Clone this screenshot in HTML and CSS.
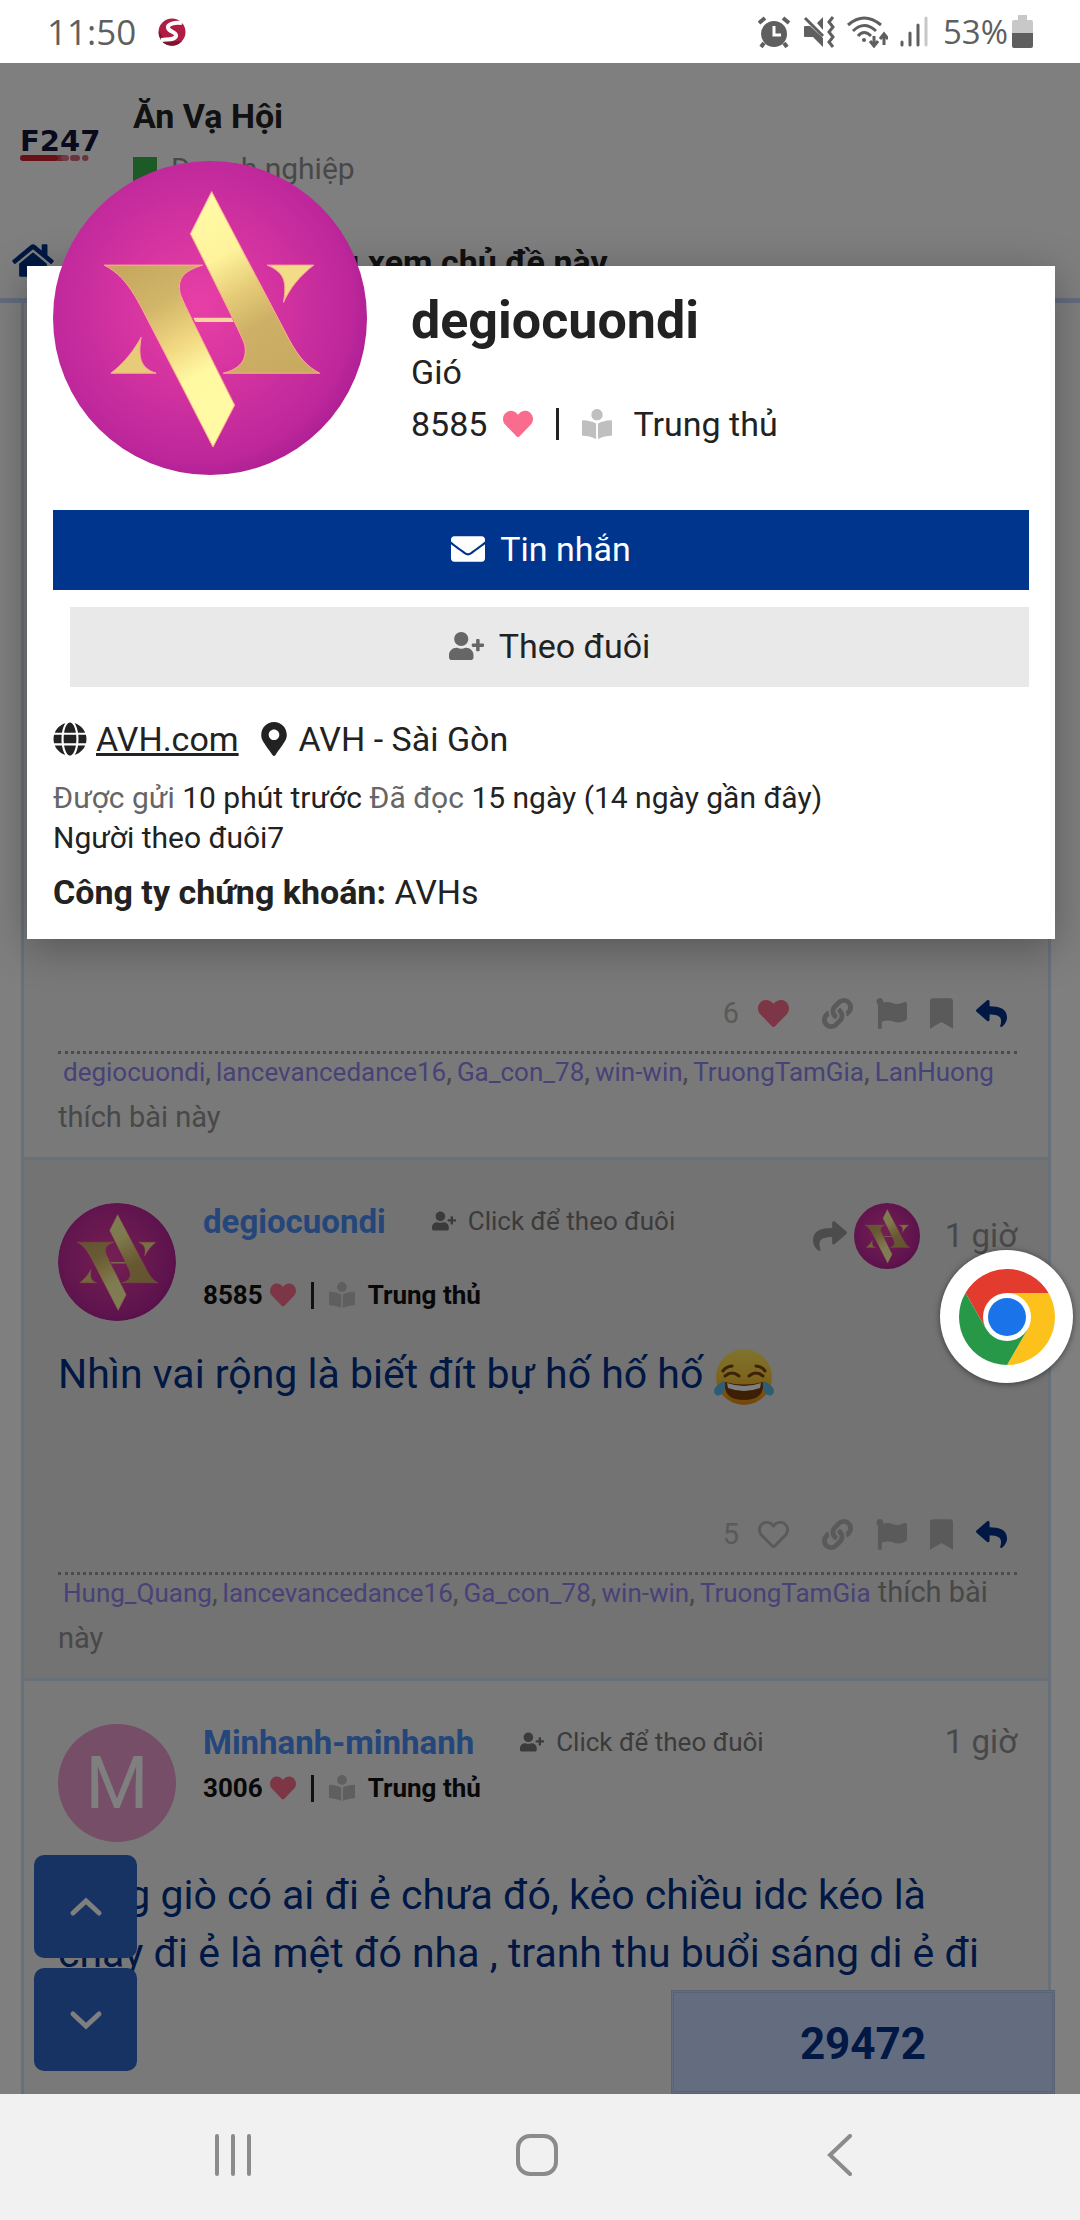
FILE: index.html
```html
<!DOCTYPE html>
<html lang="vi">

<head>
    <meta charset="UTF-8">
    <meta name="viewport" content="width=device-width, initial-scale=1.0">
    <title>Ăn Vạ Hội - F247</title>
    <link rel="stylesheet" href="styles.css">
</head>

<body>
    <!-- shared icons -->
    <svg class="sprite" width="0" height="0" aria-hidden="true">
        <defs>
            <radialGradient id="pink" cx="46%" cy="46%" r="58%">
                <stop offset="0" stop-color="#e83fa6" />
                <stop offset="0.5" stop-color="#d0319f" />
                <stop offset="0.85" stop-color="#bd279b" />
                <stop offset="1" stop-color="#aa1d92" />
            </radialGradient>
            <linearGradient id="goldA" x1="0.2" y1="0" x2="0.6" y2="1">
                <stop offset="0" stop-color="#c6a95f" />
                <stop offset="0.25" stop-color="#d0b468" />
                <stop offset="0.5" stop-color="#f0d780" />
                <stop offset="0.7" stop-color="#fff9a2" />
                <stop offset="1" stop-color="#fffaa4" />
            </linearGradient>
            <linearGradient id="goldB" x1="0.3" y1="0" x2="0.7" y2="1">
                <stop offset="0" stop-color="#fffaa6" />
                <stop offset="0.28" stop-color="#fff39c" />
                <stop offset="0.5" stop-color="#e6cc78" />
                <stop offset="0.7" stop-color="#ceb166" />
                <stop offset="1" stop-color="#c8aa60" />
            </linearGradient>
        </defs>
        <symbol id="avh" viewBox="160 33 944 944">
            <circle cx="632" cy="505" r="472" fill="url(#pink)" />
            <g stroke="#ffab8e" stroke-width="3">
                <path fill="url(#goldA)" d="M314 346H610C560 362 535 380 541 424C545 446 556 465 706 767L641 893L428 478C390 405 360 370 314 346Z" />
                <path fill="url(#goldB)" d="M637 125L870 570C900 625 925 652 962 671H672C722 658 743 632 737 590C733 570 718 540 573 252Z" />
                <path fill="#f2dc88" d="M804 346H944C900 380 872 416 853 458C862 400 860 370 804 346Z" />
                <path fill="#e6cb78" d="M425 563C416 620 420 655 470 671H334C375 640 405 600 425 563Z" />
            </g>
            <path fill="#fbd2a0" d="M582 504H697L703 517H588Z" />
        </symbol>
        <symbol id="heart" viewBox="0 0 512 512">
            <path d="M462.3 62.6C407.5 15.9 326 24.3 275.7 76.2L256 96.5l-19.7-20.3C186.1 24.3 104.5 15.9 49.7 62.6c-62.8 53.6-66.1 149.8-9.9 207.9l193.5 199.8c12.5 12.9 32.8 12.9 45.3 0l193.5-199.8c56.3-58.1 53-154.3-9.8-207.9z" />
        </symbol>
        <symbol id="heart-o" viewBox="0 0 512 512">
            <path d="M458.4 64.3C400.6 15.7 311.3 23 256 79.3 200.7 23 111.4 15.6 53.6 64.3-21.6 127.6-10.6 230.8 43 285.5l175.4 178.7c10 10.2 23.4 15.9 37.6 15.9 14.3 0 27.6-5.6 37.6-15.8L469 285.6c53.5-54.7 64.7-157.9-10.6-221.3zm-23.6 187.5L259.4 430.5c-2.4 2.4-4.4 2.4-6.8 0L77.2 251.8c-36.5-37.2-43.9-107.6 7.3-150.7 38.9-32.7 98.9-27.8 136.5 10.5l35 35.7 35-35.7c37.8-38.5 97.8-43.2 136.5-10.6 51.1 43.1 43.5 113.9 7.3 150.8z" />
        </symbol>
        <symbol id="reader" viewBox="0 0 512 512">
            <path d="M352 96c0-53-43-96-96-96s-96 43-96 96 43 96 96 96 96-43 96-96zM233.6 241.1C174.3 217.4 97 194.6 22 192.1 10 191.5 0 200.6 0 212v226c0 10.6 8.3 19.2 19.2 19.9 62 3.6 150 17.8 210 51.6 5 3 10.8-.6 10.8-6V252c0-4.5-2-8.8-6.4-10.9zM278.4 241.1C337.7 217.4 415 194.6 490 192.1 502 191.5 512 200.6 512 212v226c0 10.6-8.3 19.2-19.2 19.9-62 3.6-150 17.8-210 51.6-5 3-10.8-.6-10.8-6V252c0-4.5 2-8.8 6.4-10.9z" />
        </symbol>
        <symbol id="user-plus" viewBox="0 0 640 512">
            <path d="M624 208h-64v-64c0-8.8-7.2-16-16-16h-32c-8.8 0-16 7.2-16 16v64h-64c-8.8 0-16 7.2-16 16v32c0 8.8 7.2 16 16 16h64v64c0 8.8 7.2 16 16 16h32c8.8 0 16-7.2 16-16v-64h64c8.8 0 16-7.2 16-16v-32c0-8.8-7.2-16-16-16zm-400 48c70.7 0 128-57.3 128-128S294.7 0 224 0 96 57.3 96 128s57.3 128 128 128zm89.6 32h-16.7c-22.2 10.2-46.9 16-72.9 16s-50.6-5.8-72.9-16h-16.7C60.2 288 0 348.2 0 422.4V464c0 26.5 21.5 48 48 48h352c26.5 0 48-21.5 48-48v-41.6c0-74.2-60.2-134.4-134.4-134.4z" />
        </symbol>
        <symbol id="link" viewBox="0 0 512 512">
            <path d="M326.612 185.391c59.747 59.809 58.927 155.698.36 214.59-.11.12-.24.25-.36.37l-67.2 67.2c-59.27 59.27-155.699 59.262-214.96 0-59.27-59.26-59.27-155.7 0-214.96l37.106-37.106c9.84-9.84 26.786-3.3 27.294 10.606.648 17.722 3.826 35.527 9.69 52.721 1.986 5.822.567 12.262-3.783 16.612l-13.087 13.087c-28.026 28.026-28.905 73.66-1.155 101.96 28.024 28.579 74.086 28.749 102.325.51l67.2-67.19c28.191-28.191 28.073-73.757 0-101.83-3.701-3.694-7.429-6.564-10.341-8.569a16.037 16.037 0 0 1-6.947-12.606c-.396-10.567 3.348-21.456 11.698-29.806l21.054-21.055c5.521-5.521 14.182-6.199 20.584-1.731a152.482 152.482 0 0 1 20.522 17.197zM467.547 44.449c-59.261-59.262-155.69-59.27-214.96 0l-67.2 67.2c-.12.12-.25.25-.36.37-58.566 58.892-59.387 154.781.36 214.59a152.454 152.454 0 0 0 20.521 17.196c6.402 4.468 15.064 3.789 20.584-1.731l21.054-21.055c8.35-8.35 12.094-19.239 11.698-29.806a16.037 16.037 0 0 0-6.947-12.606c-2.912-2.005-6.64-4.875-10.341-8.569-28.073-28.073-28.191-73.639 0-101.83l67.2-67.19c28.239-28.239 74.3-28.069 102.325.51 27.75 28.3 26.872 73.934-1.155 101.96l-13.087 13.087c-4.35 4.35-5.769 10.79-3.783 16.612 5.864 17.194 9.042 34.999 9.69 52.721.509 13.906 17.454 20.446 27.294 10.606l37.106-37.106c59.271-59.259 59.271-155.699.001-214.959z" />
        </symbol>
        <symbol id="flag" viewBox="0 0 512 512">
            <path d="M349.565 98.783C295.978 98.783 251.721 64 184.348 64c-24.955 0-47.309 4.384-68.045 12.013a55.947 55.947 0 0 0 3.586-23.562C118.117 24.015 94.806 1.206 66.338.048 34.345-1.254 8 24.296 8 56c0 19.026 9.497 35.825 24 45.945V488c0 13.255 10.745 24 24 24h16c13.255 0 24-10.745 24-24v-94.4c28.311-12.064 63.582-22.122 114.435-22.122 53.588 0 97.844 34.783 165.217 34.783 48.169 0 86.667-16.294 122.505-40.858C506.84 359.452 512 349.571 512 339.045v-243.1c0-23.393-24.269-38.87-45.485-29.016-34.338 15.948-76.454 31.854-116.95 31.854z" />
        </symbol>
        <symbol id="bookmark" viewBox="0 0 384 512">
            <path d="M0 512V48C0 21.49 21.49 0 48 0h288c26.51 0 48 21.49 48 48v464L192 400 0 512z" />
        </symbol>
        <symbol id="reply" viewBox="0 0 512 512">
            <path d="M8.309 189.836L184.313 37.851C199.719 24.546 224 35.347 224 56.015v80.053c160.629 1.839 288 34.032 288 186.258 0 61.441-39.581 122.309-83.333 154.132-13.653 9.931-33.111-2.533-28.077-18.631 45.344-145.012-21.507-183.51-176.59-185.742V360c0 20.7-24.3 31.453-39.687 18.164l-176.004-152c-11.071-9.562-11.086-26.753 0-36.328z" />
        </symbol>
    </svg>

    <header class="status-bar">
        <span class="clock">11:50</span>
        <svg class="status-logo" viewBox="0 0 28 28">
            <circle cx="14" cy="14" r="13.5" fill="#b01c42" />
            <path d="M1 13A13 13 0 0 0 24 23L8 24Z" fill="#7c1430" />
            <path d="M24 5C17 4 9 6 10 10C11 14 19 14 18 18C17 22 10 21 3 22" fill="none" stroke="#fff" stroke-width="4" />
        </svg>
        <div class="status-icons">
            <svg width="34" height="32" viewBox="0 0 34 32">
                <circle cx="17" cy="18" r="13" fill="#5f5f5f" />
                <path d="M2 7L8 2M32 7L26 2M7 27L4 31M27 27L30 31" stroke="#5f5f5f" stroke-width="4" />
                <path d="M17 10V19H24" fill="none" stroke="#fff" stroke-width="3" />
            </svg>
            <svg width="32" height="32" viewBox="0 0 32 32">
                <path fill="#5f5f5f" d="M1 11Q1 10 2 10H7L20 22V31L10 21H2Q1 21 1 20ZM14 7L20 1V14Z" />
                <path d="M2 2L20 20" stroke="#5f5f5f" stroke-width="3" />
                <path d="M30 1L26 6L30 11L26 16L30 21L26 26L30 31" fill="none" stroke="#5f5f5f" stroke-width="3" />
            </svg>
            <svg width="41" height="32" viewBox="0 0 41 32">
                <g fill="none" stroke="#5f5f5f" stroke-width="3">
                    <path d="M1 9Q17 -5 34 9M6 15Q17 4 29 15M11 20Q17 13 24 20" />
                    <path d="M27 20V29M23 25L27 30L31 25M37 29V19M33 23L37 18L41 23" />
                </g>
                <circle cx="17" cy="24" r="2" fill="#5f5f5f" />
            </svg>
            <svg width="28" height="32" viewBox="0 0 28 32" stroke-width="3" stroke-linecap="round">
                <path d="M2 26V29M10 17V29M18 9V29" stroke="#5f5f5f" />
                <path d="M26 2V29" stroke="#c8c8c8" />
            </svg>
        </div>
        <span class="battery-text">53%</span>
        <svg class="battery" width="21" height="33" viewBox="0 0 21 33">
            <path fill="#c8c8c8" d="M6 0H15V5H19Q21 5 21 7V18H0V7Q0 5 2 5H6Z" />
            <path fill="#5f5f5f" d="M0 18H21V31Q21 33 19 33H2Q0 33 0 31Z" />
        </svg>
    </header>

    <main class="page">
        <div class="site-header">
            <a href="#" class="logo">
                <span>F247</span>
                <svg width="80" height="6" viewBox="0 0 80 6">
                    <path d="M3 3H36" stroke="#d3202f" stroke-width="6" stroke-linecap="round" />
                    <path d="M38 3H44" stroke="#d8485a" stroke-width="6" />
                    <path d="M44 3H46" stroke="#dc7888" stroke-width="6" stroke-linecap="round" />
                    <path d="M53 3H57M65 3H65.5" stroke="#d8687c" stroke-width="6" stroke-linecap="round" />
                </svg>
            </a>
            <div class="topic">
                <h1>Ăn Vạ Hội</h1>
                <a href="#" class="category"><span class="swatch"></span>Doanh nghiệp</a>
            </div>
        </div>
        <div class="crumbs">
            <svg width="42" height="37" viewBox="0 0 576 512">
                <path d="M280.37 148.26L96 300.11V464a16 16 0 0 0 16 16l112.06-.29a16 16 0 0 0 15.92-16V368a16 16 0 0 1 16-16h64a16 16 0 0 1 16 16v95.64a16 16 0 0 0 16 16.05L464 480a16 16 0 0 0 16-16V300L295.67 148.26a12.19 12.19 0 0 0-15.3 0zM571.6 251.47L488 182.56V44.05a12 12 0 0 0-12-12h-56a12 12 0 0 0-12 12v72.61L318.47 43a48 48 0 0 0-61 0L4.34 251.47a12 12 0 0 0-1.6 16.9l25.5 31A12 12 0 0 0 45.15 301l235.22-193.74a12.19 12.19 0 0 1 15.3 0L530.9 301a12 12 0 0 0 16.9-1.6l25.5-31a12 12 0 0 0-1.7-16.93z" />
            </svg>
            <strong>Đang xem chủ đề này</strong>
        </div>

        <div class="posts">
            <article class="post first">
                <div class="actions">
                    <span class="count">6</span>
                    <button class="liked" aria-label="Thích"><svg width="31" height="31"><use href="#heart" /></svg></button>
                    <button class="gap" aria-label="Liên kết"><svg width="31" height="31"><use href="#link" /></svg></button>
                    <button aria-label="Gắn cờ"><svg width="31" height="31"><use href="#flag" /></svg></button>
                    <button aria-label="Đánh dấu"><svg width="23" height="31"><use href="#bookmark" /></svg></button>
                    <button class="reply" aria-label="Trả lời"><svg width="31" height="31"><use href="#reply" /></svg></button>
                </div>
                <p class="likers">
                    <a href="#">degiocuondi</a>,<a href="#">lancevancedance16</a>,<a href="#">Ga_con_78</a>,<a href="#">win-win</a>,<a href="#">TruongTamGia</a>,<a href="#">LanHuong</a> thích bài này
                </p>
            </article>

            <article class="post current">
                <div class="post-head">
                    <svg class="avatar"><use href="#avh" /></svg>
                    <div class="who">
                        <div class="names">
                            <a href="#" class="user">degiocuondi</a>
                            <button class="follow"><svg width="24" height="20"><use href="#user-plus" /></svg>Click để theo đuôi</button>
                        </div>
                        <div class="stats low">
                            8585 <svg class="pink" width="26" height="26"><use href="#heart" /></svg>
                            <i class="bar"></i>
                            <svg class="grey" width="26" height="26"><use href="#reader" /></svg>
                            <span class="rank">Trung thủ</span>
                        </div>
                    </div>
                    <div class="when">
                        <svg class="share" width="34" height="34" viewBox="0 0 512 512"><use href="#reply" transform="translate(512 0) scale(-1 1)" width="512" height="512" /></svg>
                        <svg class="mini"><use href="#avh" /></svg>
                        <span class="date">1 giờ</span>
                    </div>
                </div>
                <p class="cooked">Nhìn vai rộng là biết đít bự hố hố hố
                    <svg class="joy" viewBox="0 0 62 60">
                        <defs>
                            <linearGradient id="face" x1="0" y1="0" x2="0" y2="1">
                                <stop offset="0" stop-color="#ffe95c" />
                                <stop offset="0.5" stop-color="#fccb3a" />
                                <stop offset="1" stop-color="#e88a14" />
                            </linearGradient>
                        </defs>
                        <circle cx="31" cy="30" r="28" fill="url(#face)" />
                        <path d="M12 35Q31 40 50 35Q52 53 31 53Q10 53 12 35Z" fill="#7a3e0c" />
                        <path d="M14 36Q31 42 48 36L47 41Q31 47 15 41Z" fill="#fff" />
                        <path d="M12 29Q19 23 26 29M36 29Q43 23 50 29M10 24Q12 20 19 19M52 24Q50 20 43 19" fill="none" stroke="#7a4510" stroke-width="3" stroke-linecap="round" />
                        <path d="M12 34Q1 38 1 45Q3 51 9 47Q13 43 12 34ZM50 34Q61 38 61 45Q59 51 53 47Q49 43 50 34Z" fill="#5bb8ea" />
                    </svg>
                </p>
                <div class="actions">
                    <span class="count">5</span>
                    <button aria-label="Thích"><svg width="31" height="31"><use href="#heart-o" /></svg></button>
                    <button class="gap" aria-label="Liên kết"><svg width="31" height="31"><use href="#link" /></svg></button>
                    <button aria-label="Gắn cờ"><svg width="31" height="31"><use href="#flag" /></svg></button>
                    <button aria-label="Đánh dấu"><svg width="23" height="31"><use href="#bookmark" /></svg></button>
                    <button class="reply" aria-label="Trả lời"><svg width="31" height="31"><use href="#reply" /></svg></button>
                </div>
                <p class="likers">
                    <a href="#">Hung_Quang</a>,<a href="#">lancevancedance16</a>,<a href="#">Ga_con_78</a>,<a href="#">win-win</a>,<a href="#">TruongTamGia</a> thích bài này
                </p>
            </article>

            <article class="post">
                <div class="post-head">
                    <div class="avatar letter">M</div>
                    <div class="who">
                        <div class="names">
                            <a href="#" class="user">Minhanh-minhanh</a>
                            <button class="follow"><svg width="24" height="20"><use href="#user-plus" /></svg>Click để theo đuôi</button>
                        </div>
                        <div class="stats">
                            3006 <svg class="pink" width="26" height="26"><use href="#heart" /></svg>
                            <i class="bar"></i>
                            <svg class="grey" width="26" height="26"><use href="#reader" /></svg>
                            <span class="rank">Trung thủ</span>
                        </div>
                    </div>
                    <div class="when">
                        <span class="date">1 giờ</span>
                    </div>
                </div>
                <p class="cooked">Sáng giò có ai đi ẻ chưa đó, kẻo chiều idc kéo là chạy đi ẻ là mệt đó nha , tranh thu buổi sáng di ẻ đi</p>
            </article>
        </div>

        <div class="scroll-buttons">
            <button aria-label="Lên"><svg width="34" height="22" viewBox="0 0 34 22"><path d="M4 17L17 5L30 17" /></svg></button>
            <button aria-label="Xuống"><svg width="34" height="22" viewBox="0 0 34 22"><path d="M4 5L17 17L30 5" /></svg></button>
        </div>
        <div class="progress">29472</div>

        <div class="overlay"></div>

        <section class="user-card">
            <div class="card-head">
                <svg class="card-avatar"><use href="#avh" /></svg>
                <div class="card-names">
                    <h2>degiocuondi</h2>
                    <div>Gió</div>
                    <div class="card-stats">
                        8585 <svg class="pink" width="30" height="30"><use href="#heart" /></svg>
                        <i class="bar"></i>
                        <svg class="grey" width="30" height="30"><use href="#reader" /></svg>
                        <span class="rank">Trung thủ</span>
                    </div>
                </div>
            </div>
            <button class="btn primary">
                <svg width="34" height="34" viewBox="0 0 512 512">
                    <path d="M502.3 190.8c3.9-3.1 9.7-.2 9.7 4.7V400c0 26.5-21.5 48-48 48H48c-26.5 0-48-21.5-48-48V195.6c0-5 5.7-7.8 9.7-4.7 22.4 17.4 52.1 39.5 154.1 113.6 21.1 15.4 56.7 47.8 92.2 47.6 35.7.3 72-32.8 92.3-47.6 102-74.1 131.6-96.3 154-113.7zM256 320c23.2.4 56.6-29.2 73.4-41.4 132.7-96.3 142.8-104.7 173.4-128.7 5.8-4.5 9.2-11.5 9.2-18.9v-19c0-26.5-21.5-48-48-48H48c-26.5 0-48 21.5-48 48v19c0 7.4 3.4 14.3 9.2 18.9 30.6 23.9 40.7 32.4 173.4 128.7 16.8 12.2 50.2 41.8 73.4 41.4z" />
                </svg>Tin nhắn</button>
            <button class="btn"><svg width="35" height="28"><use href="#user-plus" /></svg>Theo đuôi</button>
            <div class="place">
                <svg width="34" height="34" viewBox="0 0 496 512">
                    <path d="M336.5 160C322 70.7 287.8 8 248 8s-74 62.7-88.5 152h177zM152 256c0 22.2 1.2 43.5 3.3 64h185.3c2.1-20.5 3.3-41.8 3.3-64s-1.2-43.5-3.3-64H155.3c-2.1 20.5-3.3 41.8-3.3 64zm324.7-96c-28.6-67.9-86.5-120.4-158-141.6 24.4 33.8 41.2 84.7 50 141.6h108zM177.2 18.4C105.8 39.6 47.8 92.1 19.3 160h108c8.7-56.9 25.5-107.8 49.9-141.6zM487.4 192H372.7c2.1 21 3.3 42.5 3.3 64s-1.2 43-3.3 64h114.6c5.5-20.5 8.6-41.8 8.6-64s-3.1-43.5-8.5-64zM120 256c0-21.5 1.2-43 3.3-64H8.6C3.2 212.5 0 233.8 0 256s3.2 43.5 8.6 64h114.6c-2-21-3.2-42.5-3.2-64zm39.5 96c14.5 89.3 48.7 152 88.5 152s74-62.7 88.5-152h-177zm159.3 141.6c71.4-21.2 129.4-73.7 158-141.6h-108c-8.8 56.9-25.6 107.8-50 141.6zM19.3 352c28.6 67.9 86.5 120.4 158 141.6-24.4-33.8-41.2-84.7-50-141.6h-108z" />
                </svg>
                <a href="#">AVH.com</a>
                <svg class="pin" width="26" height="34" viewBox="0 0 384 512">
                    <path d="M172.268 501.67C26.97 291.031 0 269.413 0 192 0 85.961 85.961 0 192 0s192 85.961 192 192c0 77.413-26.97 99.031-172.268 309.67-9.535 13.774-29.93 13.773-39.464 0zM192 272c44.183 0 80-35.817 80-80s-35.817-80-80-80-80 35.817-80 80 35.817 80 80 80z" />
                </svg>
                <span>AVH - Sài Gòn</span>
            </div>
            <div class="meta">
                <div><span>Được gửi</span> 10 phút trước <span>Đã đọc</span> 15 ngày (14 ngày gần đây)</div>
                <div>Người theo đuôi7</div>
            </div>
            <div class="company"><b>Công ty chứng khoán:</b> AVHs</div>
        </section>

        <a href="#" class="bubble" aria-label="Chrome">
            <svg width="96" height="96" viewBox="0 0 96 96">
                <path fill="#e33b2e" d="M6.43 24A48 48 0 0 1 89.57 24H48L27.2 60Z" />
                <path fill="#fcc21b" d="M89.57 24A48 48 0 0 1 48 96L68.8 60L48 24Z" />
                <path fill="#279847" d="M48 96A48 48 0 0 1 6.43 24L27.2 60L68.8 60Z" />
                <circle cx="48" cy="48" r="24" fill="#fff" />
                <circle cx="48" cy="48" r="19" fill="#1a73e8" />
            </svg>
        </a>
    </main>

    <nav class="nav-bar">
        <button aria-label="Gần đây"><svg width="42" height="42" viewBox="0 0 42 42"><path d="M4 2V40M20 2V40M36 2V40" /></svg></button>
        <button aria-label="Trang chính"><svg width="42" height="42" viewBox="0 0 42 42"><rect x="2" y="2" width="38" height="38" rx="12" /></svg></button>
        <button aria-label="Quay lại"><svg width="42" height="42" viewBox="0 0 42 42"><path d="M31 2L11 21L31 40" /></svg></button>
    </nav>
</body>

</html>
```
FILE: styles.css
```css
* {
    box-sizing: border-box;
}

body {
    margin: 0;
    min-height: 100vh;
    display: flex;
    flex-direction: column;
    font-family: Roboto, "Noto Sans", sans-serif;
    font-size: 34px;
    color: #222;
}

h1,
h2,
p {
    margin: 0;
}

a {
    color: inherit;
    text-decoration: none;
}

button {
    border: 0;
    padding: 0;
    background: none;
    font: inherit;
    color: inherit;
    cursor: pointer;
}

svg {
    display: block;
    flex: none;
    fill: currentColor;
}

.sprite {
    position: absolute;
}

/* phone status bar */
.status-bar {
    display: flex;
    align-items: center;
    height: 63px;
    padding: 0 47px;
    background: #fff;
    color: #5f5f5f;
    font-family: "Open Sans", sans-serif;
}

.clock {
    font-size: 35px;
}

.status-logo {
    width: 28px;
    height: 28px;
    margin-left: 22px;
}

.status-icons {
    display: flex;
    gap: 12px;
    margin-left: auto;
}

.battery-text {
    font-size: 33px;
    margin-left: 15px;
}

.battery {
    margin-left: 4px;
}

/* page */
.page {
    position: relative;
    flex: 1;
    display: flex;
    flex-direction: column;
    overflow: hidden;
    background: #fff;
}

.site-header {
    display: flex;
    align-items: center;
    gap: 30px;
    padding: 30px 20px 0;
}

.logo {
    display: flex;
    flex-direction: column;
    width: 83px;
    padding-top: 6px;
    color: #14143c;
    font: bold 29px/28px "DejaVu Sans", sans-serif;
}

.topic h1 {
    font-size: 34px;
    line-height: 46px;
}

.category {
    display: flex;
    align-items: center;
    gap: 14px;
    margin-top: 10px;
    font-size: 30px;
    line-height: 40px;
    color: #919191;
}

.swatch {
    width: 24px;
    height: 24px;
    background: #3ab54a;
}

.crumbs {
    display: flex;
    align-items: flex-start;
    gap: 226px;
    height: 95px;
    margin-top: 19px;
    padding: 34px 12px 0;
    border-bottom: 5px solid #c8dafa;
    line-height: 40px;
    color: #003087;
}

.crumbs strong {
    color: #222;
}

.posts {
    flex: 1;
    margin: 0 29px 0 21px;
    border: solid #d1e0f5;
    border-width: 0 3px;
    background: #f3f3f3;
}

.post {
    padding: 43px 31px 17px 34px;
}

.post.first,
.post.current {
    border-bottom: 3px solid #d1e0f5;
}

.post.first {
    display: flex;
    flex-direction: column;
    justify-content: flex-end;
    min-height: 857px;
}

.post.current {
    background: #e6e6e6;
}

.actions {
    display: flex;
    align-items: center;
    justify-content: flex-end;
    gap: 23px;
    height: 63px;
    padding: 0 10px 16px;
    border-bottom: 3px dotted #999;
    color: #b4b4b4;
}

.actions .count {
    margin-right: -4px;
    font-size: 29px;
}

.actions .gap {
    margin-left: 10px;
}

.actions .liked,
.pink {
    color: #fa6c8d;
}

.actions .reply {
    color: #003087;
}

.likers {
    margin-top: -5px;
    font-size: 29px;
    line-height: 45px;
    color: #919191;
}

.likers a {
    margin-left: 5px;
    font-size: 26px;
    color: #8f84ef;
}

.post-head {
    display: flex;
    align-items: flex-start;
}

.avatar {
    width: 118px;
    height: 118px;
    margin-right: 27px;
    border-radius: 50%;
}

.letter {
    display: grid;
    place-items: center;
    background: #ee9ccf;
    color: #fff;
    font-size: 72px;
}

.names {
    display: flex;
    align-items: center;
    height: 36px;
}

.user {
    font-size: 33px;
    font-weight: bold;
    color: #4a8cf5;
}

.follow {
    display: flex;
    align-items: center;
    gap: 12px;
    margin-left: 46px;
    font-size: 26px;
    color: #777;
}

.stats {
    display: flex;
    align-items: center;
    gap: 7px;
    margin-top: 12px;
    font-size: 26px;
    line-height: 32px;
    font-weight: bold;
    color: #111;
}

.stats.low {
    margin-top: 40px;
}

.bar {
    width: 3px;
    height: 27px;
    margin: 0 8px;
    background: #222;
}

.grey {
    color: #bfbfbf;
}

.rank {
    margin-left: 6px;
}

.when {
    display: flex;
    align-items: center;
    margin-left: auto;
    color: #919191;
}

.share {
    margin-right: 7px;
    color: #999;
}

.mini {
    width: 66px;
    height: 66px;
    margin-right: 25px;
}

.date {
    font-size: 33px;
    line-height: 36px;
}

.cooked {
    margin-top: 24px;
    font-size: 41px;
    line-height: 58px;
    color: #003087;
}

.current .cooked {
    min-height: 167px;
}

.joy {
    display: inline-block;
    width: 62px;
    height: 60px;
    vertical-align: middle;
}

.scroll-buttons {
    position: absolute;
    left: 34px;
    bottom: 23px;
    display: grid;
    gap: 10px;
}

.scroll-buttons button {
    display: grid;
    place-items: center;
    width: 103px;
    height: 103px;
    border-radius: 10px;
    background: #2c66c8;
}

.scroll-buttons path {
    fill: none;
    stroke: #fff;
    stroke-width: 5;
    stroke-linecap: round;
}

.progress {
    position: absolute;
    right: 25px;
    bottom: 0;
    width: 384px;
    height: 104px;
    border: 3px double #b4c6e8;
    background: #c8daff;
    color: #003087;
    font-size: 44px;
    line-height: 102px;
    font-weight: bold;
    text-align: center;
}

.overlay {
    position: absolute;
    inset: 0;
    background: rgba(0, 0, 0, 0.5);
}

/* user card */
.user-card {
    position: absolute;
    top: 203px;
    left: 27px;
    right: 25px;
    padding: 0 26px 24px;
    background: #fff;
    box-shadow: 0 8px 40px rgba(0, 0, 0, 0.3);
}

.card-head {
    display: flex;
    gap: 44px;
    line-height: 50px;
}

.card-avatar {
    width: 314px;
    height: 314px;
    margin-top: -105px;
}

.card-names {
    padding-top: 29px;
}

.card-names h2 {
    font-size: 52px;
    line-height: 52px;
}

.card-stats {
    display: flex;
    align-items: center;
    gap: 16px;
    margin-top: 2px;
}

.card-stats .bar {
    height: 32px;
    margin: 0 7px;
}

.card-stats .rank {
    margin-left: 5px;
}

.btn {
    display: flex;
    align-items: center;
    justify-content: center;
    gap: 15px;
    width: calc(100% - 17px);
    height: 80px;
    margin: 17px 0 0 17px;
    padding-bottom: 3px;
    background: #e9e9e9;
}

.btn svg {
    color: #666;
}

.btn.primary {
    width: 100%;
    margin: 35px 0 0;
    background: #00358e;
    color: #fff;
}

.btn.primary svg {
    color: #fff;
}

.place {
    display: flex;
    align-items: center;
    gap: 9px;
    margin-top: 31px;
    line-height: 42px;
}

.place a {
    text-decoration: underline;
}

.pin {
    margin: 0 3px 0 13px;
}

.meta {
    margin-top: 18px;
    font-size: 30px;
    line-height: 40px;
}

.meta span {
    color: #666;
}

.company {
    margin-top: 11px;
    line-height: 46px;
}

.bubble {
    position: absolute;
    top: 1187px;
    right: 7px;
    display: grid;
    place-items: center;
    width: 133px;
    height: 133px;
    border-radius: 50%;
    background: #fff;
    box-shadow: 0 1px 6px rgba(0, 0, 0, 0.5);
}

/* phone navigation */
.nav-bar {
    display: flex;
    justify-content: space-around;
    align-items: center;
    height: 126px;
    padding: 0 88px 4px 82px;
    background: #f1f1f1;
}

.nav-bar svg {
    fill: none;
    stroke: #8b8b8b;
    stroke-width: 4;
    stroke-linecap: round;
}
```
